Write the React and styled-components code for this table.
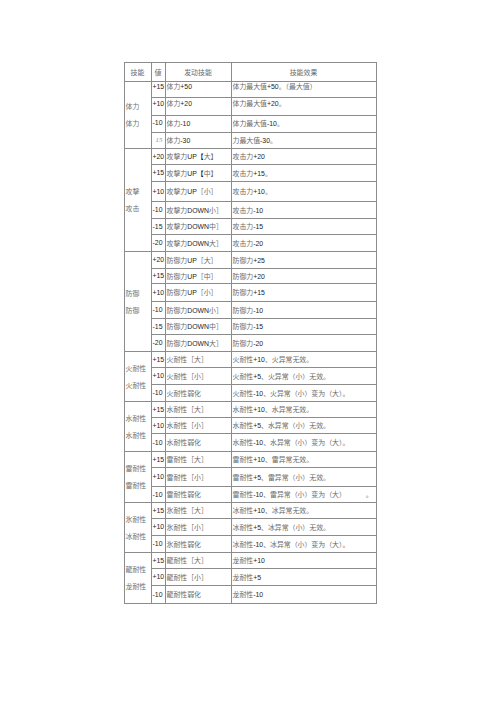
import React from "react";
import styled, { createGlobalStyle } from "styled-components";

const Global = createGlobalStyle`
  html, body { margin: 0; padding: 0; background: #ffffff; }
  body { font-family: "Liberation Sans", "Noto Sans CJK SC", sans-serif; }
`;

const Page = styled.div`
  width: 500px;
  height: 708px;
  padding-top: 62px;
  box-sizing: border-box;
  background: #fff;
`;

const Table = styled.table`
  margin: 0 auto;
  width: 252px;
  table-layout: fixed;
  border-collapse: collapse;
  font-size: 6.9px;
  color: #1e1e1e;
  border: 1px solid #8c8c8c;
`;

const Row = styled.tr`
  height: ${(p) => p.$h}px;
`;

const Head = styled.th`
  font-weight: normal;
  text-align: center;
  border: 1px solid #8c8c8c;
  padding: 0;
  height: 18px;
  color: #777;
  white-space: nowrap;
`;

const Cell = styled.td`
  border: 1px solid #8c8c8c;
  padding: 0 0 ${(p) => p.$lift || 0}px ${(p) => p.$pad || 1}px;
  vertical-align: middle;
  white-space: nowrap;
  overflow: visible;
  line-height: 8px;
`;

const LabelCell = styled.td`
  border: 1px solid #8c8c8c;
  padding: 0 0 0 1px;
  vertical-align: middle;
  white-space: nowrap;
  line-height: 17px;
  color: #6f6f6f;
`;

const Han = styled.span`
  font-family: "Noto Sans CJK SC", sans-serif;
  color: #6a6a6a;
`;

const Mark = styled.span`
  font-family: "Noto Sans CJK SC", sans-serif;
  color: #111;
  font-weight: 700;
`;

const Odd = styled.span`
  font-family: "Liberation Serif", serif;
  font-style: italic;
  color: #8a8a8a;
  padding-left: 3px;
`;

const Gap = styled.span`
  display: inline-block;
  width: ${(p) => p.$w}px;
`;

function Txt({ t }) {
  const parts = t.split(/([【】]|[\u3000-\u303f\u3040-\u9fff\uff00-\uffef]+)/).filter(Boolean);
  return parts.map((p, i) => {
    if (p === "【" || p === "】") return <Mark key={i}>{p}</Mark>;
    if (/[\u3000-\u9fff\uff00-\uffef]/.test(p)) return <Han key={i}>{p}</Han>;
    return <React.Fragment key={i}>{p}</React.Fragment>;
  });
}

const groups = [
  {
    label: ["体力", "体力"],
    rows: [
      { v: "+15", s: "体力+50", e: "体力最大值+50。（最大值）", h: 16, lift: 6 },
      { v: "+10", s: "体力+20", e: "体力最大值+20。", h: 18, lift: 6 },
      { v: "-10", s: "体力-10", e: "体力最大值-10。", h: 17, lift: 2 },
      { v: "15", odd: true, s: "体力-30", e: "力最大值-30。", h: 16, lift: 1 },
    ],
  },
  {
    label: ["攻擊", "攻击"],
    rows: [
      { v: "+20", s: "攻擊力UP【大】", e: "攻击力+20", h: 16 },
      { v: "+15", s: "攻擊力UP【中】", e: "攻击力+15。", h: 17 },
      { v: "+10", s: "攻擊力UP［小］", e: "攻击力+10。", h: 20 },
      { v: "-10", s: "攻擊力DOWN小］", e: "攻击力-10", h: 17 },
      { v: "-15", s: "攻擊力DOWN中］", e: "攻击力-15", h: 16 },
      { v: "-20", s: "攻擊力DOWN大］", e: "攻击力-20", h: 17 },
    ],
  },
  {
    label: ["防御", "防御"],
    rows: [
      { v: "+20", s: "防御力UP［大］", e: "防御力+25", h: 17 },
      { v: "+15", s: "防御力UP［中］", e: "防御力+20", h: 15 },
      { v: "+10", s: "防御力UP［小］", e: "防御力+15", h: 18 },
      { v: "-10", s: "防御力DOWN小］", e: "防御力-10", h: 17 },
      { v: "-15", s: "防御力DOWN中］", e: "防御力-15", h: 16 },
      { v: "-20", s: "防御力DOWN大］", e: "防御力-20", h: 17 },
    ],
  },
  {
    label: ["火耐性", "火耐性"],
    rows: [
      { v: "+15", s: "火耐性［大］", e: "火耐性+10、火异常无效。", h: 16 },
      { v: "+10", s: "火耐性［小］", e: "火耐性+5、火异常（小）无效。", h: 17 },
      { v: "-10", s: "火耐性弱化", e: "火耐性-10、火异常（小）变为（大）。", h: 17 },
    ],
  },
  {
    label: ["水耐性", "水耐性"],
    rows: [
      { v: "+15", s: "水耐性［大］", e: "水耐性+10、水异常无效。", h: 16 },
      { v: "+10", s: "水耐性［小］", e: "水耐性+5、水异常（小）无效。", h: 16 },
      { v: "-10", s: "水耐性弱化", e: "水耐性-10、水异常（小）变为（大）。", h: 18 },
    ],
  },
  {
    label: ["雷耐性", "雷耐性"],
    rows: [
      { v: "+15", s: "雷耐性［大］", e: "雷耐性+10、雷异常无效。", h: 16 },
      { v: "+10", s: "雷耐性［小］", e: "雷耐性+5、雷异常（小）无效。", h: 19 },
      { v: "-10", s: "雷耐性弱化", e: "雷耐性-10、雷异常（小）变为（大）", tail: "。", h: 16 },
    ],
  },
  {
    label: ["氷耐性", "冰耐性"],
    rows: [
      { v: "+15", s: "氷耐性［大］", e: "冰耐性+10、冰异常无效。", h: 16 },
      { v: "+10", s: "氷耐性［小］", e: "冰耐性+5、冰异常（小）无效。", h: 17 },
      { v: "-10", s: "氷耐性弱化", e: "冰耐性-10、冰异常（小）变为（大）。", h: 17 },
    ],
  },
  {
    label: ["龍耐性", "龙耐性"],
    rows: [
      { v: "+15", s: "龍耐性［大］", e: "龙耐性+10", h: 16 },
      { v: "+10", s: "龍耐性［小］", e: "龙耐性+5", h: 17 },
      { v: "-10", s: "龍耐性弱化", e: "龙耐性-10", h: 18 },
    ],
  },
];

export default function App() {
  return (
    <Page>
      <Global />
      <Table>
        <colgroup>
          <col style={{ width: 27 }} />
          <col style={{ width: 14 }} />
          <col style={{ width: 66 }} />
          <col style={{ width: 145 }} />
        </colgroup>
        <thead>
          <tr>
            <Head><Han>技能</Han></Head>
            <Head><Han>値</Han></Head>
            <Head><Han>发动技能</Han></Head>
            <Head><Han>技能效果</Han></Head>
          </tr>
        </thead>
        <tbody>
          {groups.map((g, gi) =>
            g.rows.map((r, ri) => (
              <Row key={`${gi}-${ri}`} $h={r.h}>
                {ri === 0 && (
                  <LabelCell rowSpan={g.rows.length}>
                    {g.label[0]}
                    <br />
                    {g.label[1]}
                  </LabelCell>
                )}
                <Cell $lift={r.lift} $pad={0}>
                  {r.odd ? <Odd>{r.v}</Odd> : r.v}
                </Cell>
                <Cell $lift={r.lift} $pad={1}>
                  <Txt t={r.s} />
                </Cell>
                <Cell $lift={r.lift} $pad={1}>
                  <Txt t={r.e} />
                  {r.tail && (
                    <>
                      <Gap $w={20} />
                      <Han>{r.tail}</Han>
                    </>
                  )}
                </Cell>
              </Row>
            ))
          )}
        </tbody>
      </Table>
    </Page>
  );
}
